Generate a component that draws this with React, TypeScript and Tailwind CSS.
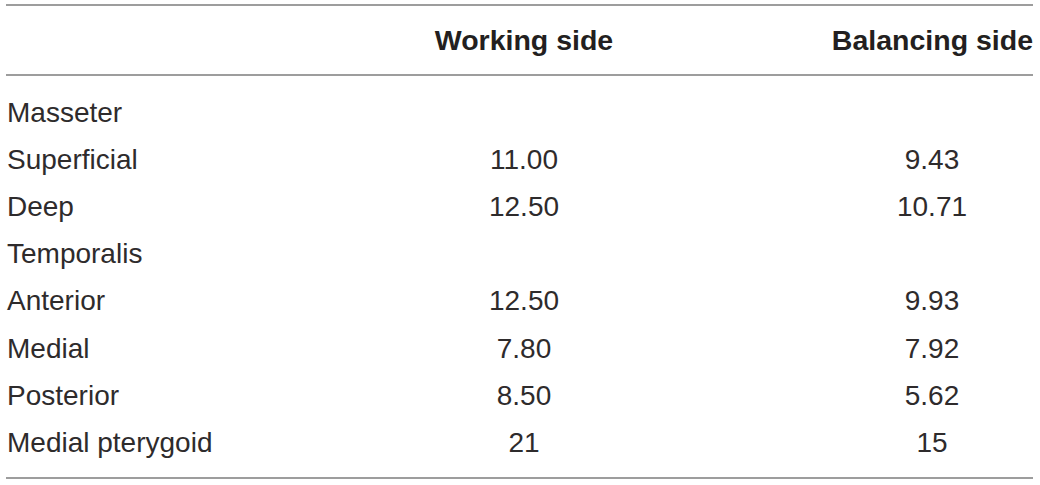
const rows: { label: string; working?: string; balancing?: string }[] = [
  { label: 'Masseter' },
  { label: 'Superficial', working: '11.00', balancing: '9.43' },
  { label: 'Deep', working: '12.50', balancing: '10.71' },
  { label: 'Temporalis' },
  { label: 'Anterior', working: '12.50', balancing: '9.93' },
  { label: 'Medial', working: '7.80', balancing: '7.92' },
  { label: 'Posterior', working: '8.50', balancing: '5.62' },
  { label: 'Medial pterygoid', working: '21', balancing: '15' },
];

export default function App() {
  return (
    <div className="w-[1040px] h-[485px] bg-white pt-[4px] font-['Liberation_Sans',Arial,sans-serif] text-[#231f20]">
      <div className="ml-[6px] w-[1027px] border-t-2 border-b-2 border-[#9d9d9d]">
        {/* Header */}
        <div className="grid grid-cols-[418px_200px_207px_202px] h-[70px] items-center border-b-2 border-[#9d9d9d] text-[28.5px] font-bold">
          <span />
          <span className="text-center whitespace-nowrap">Working side</span>
          <span />
          <span className="text-right whitespace-nowrap">Balancing side</span>
        </div>

        {/* Body */}
        <div className="pt-[13px] pb-[10px] text-[28px] text-[#2e2b2c]">
          {rows.map((r) => (
            <div
              key={r.label}
              className="grid grid-cols-[418px_200px_207px_202px] h-[47.2px] items-center leading-none"
            >
              <span className="pl-[1px] whitespace-nowrap">{r.label}</span>
              <span className="text-center">{r.working ?? ''}</span>
              <span />
              <span className="text-center">{r.balancing ?? ''}</span>
            </div>
          ))}
        </div>
      </div>
    </div>
  );
}
